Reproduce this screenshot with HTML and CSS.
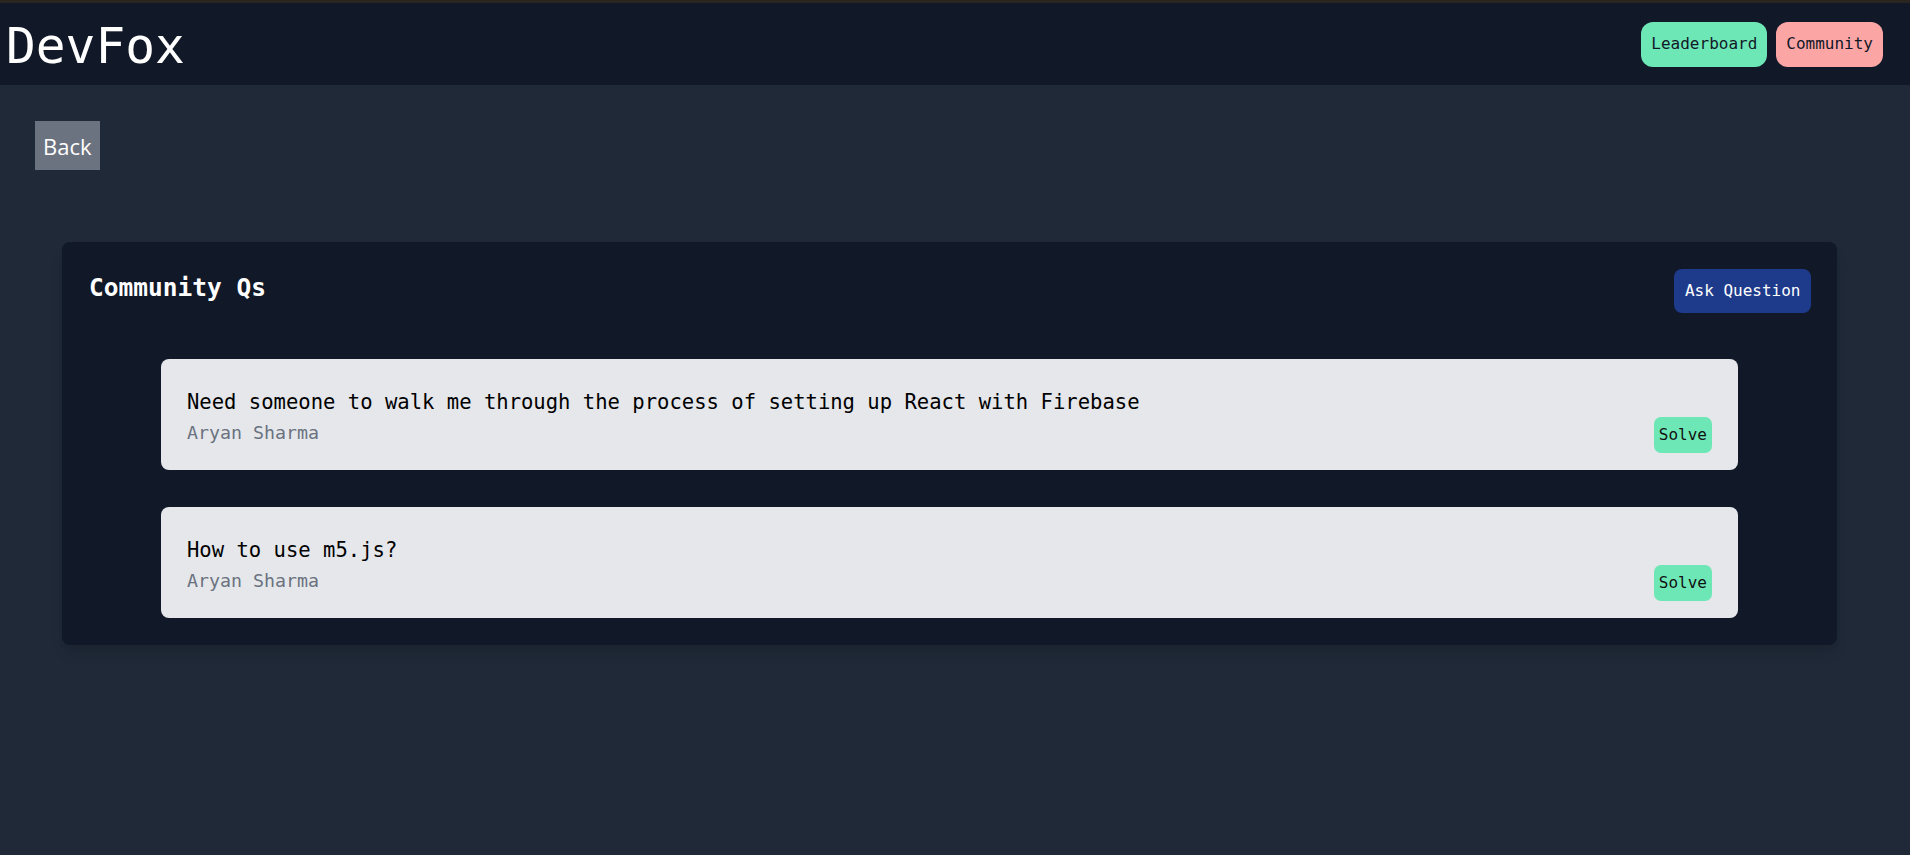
FILE: index.html
```html
<!DOCTYPE html>
<html lang="en">
<head>
<meta charset="utf-8">
<title>DevFox – Community Qs</title>
<link rel="stylesheet" href="styles.css">
</head>
<body>
<header class="topbar">
  <h1 class="brand">DevFox</h1>
  <nav class="nav">
    <a class="pill pill-green" href="#">Leaderboard</a>
    <a class="pill pill-red" href="#">Community</a>
  </nav>
</header>
<main class="page">
  <button class="back" type="button">Back</button>
  <section class="panel">
    <div class="panel-head">
      <h2 class="panel-title">Community Qs</h2>
      <button class="ask" type="button">Ask Question</button>
    </div>
    <div class="qlist">
      <article class="qcard">
        <div class="qbody">
          <p class="qtext">Need someone to walk me through the process of setting up React with Firebase</p>
          <p class="qauthor">Aryan Sharma</p>
        </div>
        <button class="solve" type="button">Solve</button>
      </article>
      <article class="qcard">
        <div class="qbody">
          <p class="qtext">How to use m5.js?</p>
          <p class="qauthor">Aryan Sharma</p>
        </div>
        <button class="solve" type="button">Solve</button>
      </article>
    </div>
  </section>
</main>
</body>
</html>
```
FILE: styles.css
```css
* { box-sizing: border-box; }

html, body {
  margin: 0;
  padding: 0;
}

body {
  background: #1f2937;
  min-height: 855px;
  font-family: "DejaVu Sans Mono", monospace;
}

.topbar {
  display: flex;
  justify-content: space-between;
  align-items: center;
  height: 85px;
  border-top: 3px solid #2a2521;
  background: #111827;
  padding: 0 27px 0 6px;
}

.brand {
  margin: 4px 0 0;
  font-family: "DejaVu Sans Mono", monospace;
  font-weight: 400;
  font-size: 49.5px;
  line-height: 48px;
  color: #ffffff;
}

.nav {
  display: flex;
  gap: 9px;
}

.pill {
  display: block;
  font-family: "DejaVu Sans Mono", monospace;
  font-size: 16px;
  line-height: 24px;
  padding: 10.5px 10px;
  border-radius: 12px;
  color: #111827;
  text-decoration: none;
}

.pill-green { background: #6ee7b7; }
.pill-red { background: #fca5a5; }

.page {
  padding: 36px 0 0 35px;
}

.back {
  display: block;
  border: 0;
  margin: 0;
  background: #6b7280;
  color: #ffffff;
  font-family: "Open Sans", "Noto Sans", sans-serif;
  font-size: 22px;
  line-height: 30px;
  padding: 9.5px 8px;
  cursor: pointer;
}

.panel {
  margin: 72px 0 0 27px;
  width: 1775px;
  background: #111827;
  border-radius: 8px;
  padding: 27px 26px 27px 27px;
  box-shadow: 0 10px 15px -3px rgba(0, 0, 0, 0.1), 0 4px 6px -2px rgba(0, 0, 0, 0.05);
}

.panel-head {
  display: flex;
  justify-content: space-between;
  align-items: flex-start;
}

.panel-title {
  margin: 0;
  font-family: "DejaVu Sans Mono", monospace;
  font-weight: 700;
  font-size: 24.5px;
  line-height: 37px;
  color: #ffffff;
}

.ask {
  border: 0;
  margin: 0;
  background: #1e3a8a;
  color: #ffffff;
  font-family: "DejaVu Sans Mono", monospace;
  font-size: 16px;
  line-height: 24px;
  padding: 10px 10.5px;
  border-radius: 8px;
  cursor: pointer;
}

.qlist {
  display: flex;
  flex-direction: column;
  gap: 37px;
  margin-top: 46px;
  padding: 0 73px 0 72px;
}

.qcard {
  display: flex;
  justify-content: space-between;
  align-items: flex-end;
  background: #e5e7eb;
  border-radius: 8px;
  padding: 29px 26px 17px 26px;
}

.qbody {
  padding-bottom: 6px;
}

.qtext {
  margin: 0;
  font-family: "DejaVu Sans Mono", monospace;
  font-size: 20.55px;
  line-height: 28px;
  color: #000000;
}

.qauthor {
  margin: 3px 0 0;
  font-family: "DejaVu Sans Mono", monospace;
  font-size: 18.3px;
  line-height: 28px;
  color: #6b7280;
}

.solve {
  border: 0;
  margin: 0;
  background: #6ee7b7;
  color: #111111;
  font-family: "DejaVu Sans Mono", monospace;
  font-size: 16px;
  line-height: 24px;
  padding: 6px 5px;
  border-radius: 7px;
  cursor: pointer;
}
```
